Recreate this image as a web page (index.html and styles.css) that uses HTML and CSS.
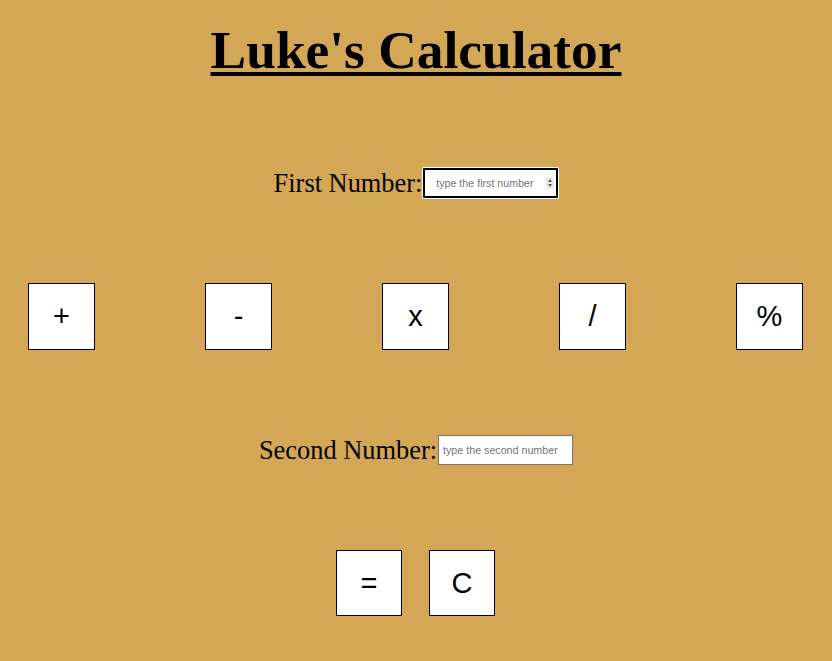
FILE: index.html
```html
<!DOCTYPE html>
<html lang="en">
<head>
<meta charset="utf-8">
<title>Luke's Calculator</title>
<link rel="stylesheet" href="styles.css">
</head>
<body>
<main class="calc">
  <h1 class="title">Luke's Calculator</h1>
  <div class="field-row field-row--first">
    <label class="field-label" for="first">First Number:</label>
    <span class="num-wrap">
      <input class="num-input num-input--first" id="first" type="text" placeholder="type the first number">
      <span class="spinner"><span class="spin-up"></span><span class="spin-down"></span></span>
    </span>
  </div>
  <div class="ops-row">
    <button class="key">+</button>
    <button class="key">-</button>
    <button class="key">x</button>
    <button class="key">/</button>
    <button class="key">%</button>
  </div>
  <div class="field-row">
    <label class="field-label" for="second">Second Number:</label>
    <input class="num-input num-input--second" id="second" type="text" placeholder="type the second number">
  </div>
  <div class="result-row">
    <button class="key">=</button>
    <button class="key">C</button>
  </div>
</main>
</body>
</html>
```
FILE: styles.css
```css
html, body {
  margin: 0;
  padding: 0;
}
body {
  background: #d4a757;
  font-family: "Liberation Serif", "Times New Roman", serif;
  color: #000;
  width: 832px;
  height: 661px;
  overflow: hidden;
}
.calc {
  display: flex;
  flex-direction: column;
}
.title {
  margin: 21px 0 0 0;
  font-size: 53.4px;
  font-weight: bold;
  text-align: center;
  text-decoration: underline;
  text-decoration-thickness: 4px;
  text-underline-offset: 4px;
  line-height: 59px;
}
.field-row {
  display: flex;
  justify-content: center;
  align-items: center;
  margin-top: 85px;
}
.field-row--first {
  margin-top: 88px;
}
.field-label {
  font-size: 26.4px;
  line-height: 29px;
}
.num-wrap {
  position: relative;
  display: inline-block;
  margin-left: 1px;
}
.num-input {
  font-family: "Liberation Sans", Arial, sans-serif;
  font-size: 10.7px;
  background: #fff;
  box-sizing: border-box;
  margin: 0;
  outline: none;
  color: #000;
}
.num-input::placeholder {
  color: #757575;
}
.num-input--first {
  display: block;
  width: 135px;
  height: 30px;
  border: 2px solid #000;
  box-shadow: 0 0 0 1px #fff;
  border-radius: 1px;
  text-align: center;
  padding: 0 14px 0 2px;
}
.spinner {
  position: absolute;
  right: 4px;
  top: 9px;
  width: 8px;
  height: 12px;
  background: #ececec;
  display: flex;
  flex-direction: column;
  align-items: center;
  justify-content: center;
  gap: 2px;
}
.spin-up {
  width: 0;
  height: 0;
  border-left: 2px solid transparent;
  border-right: 2px solid transparent;
  border-bottom: 3px solid #555;
}
.spin-down {
  width: 0;
  height: 0;
  border-left: 2px solid transparent;
  border-right: 2px solid transparent;
  border-top: 3px solid #555;
}
.num-input--second {
  width: 135px;
  height: 30px;
  border: 1px solid #7f766a;
  padding: 0 2px 0 4px;
  margin-left: 1px;
}
.ops-row {
  display: flex;
  gap: 110px;
  padding-left: 28px;
  margin-top: 85px;
}
.result-row {
  display: flex;
  justify-content: center;
  gap: 27px;
  margin-top: 85px;
  padding-right: 1px;
}
.key {
  width: 67px;
  height: 67px;
  box-sizing: border-box;
  background: #fff;
  border: 1px solid #000;
  border-radius: 0;
  margin: 0;
  padding: 0;
  font-family: "Liberation Sans", Arial, sans-serif;
  font-size: 29px;
  color: #000;
  display: flex;
  align-items: center;
  justify-content: center;
}
.result-row .key {
  width: 66px;
  height: 66px;
}
```
